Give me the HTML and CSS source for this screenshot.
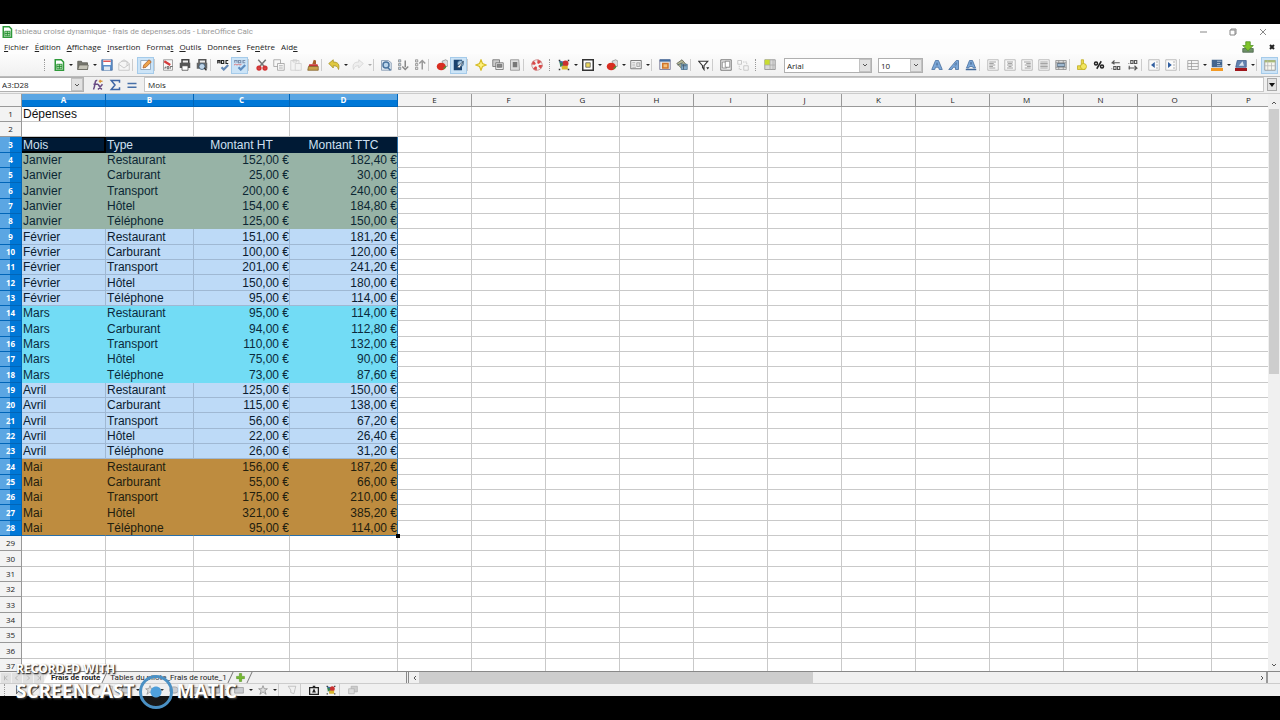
FILE: index.html
```html
<!DOCTYPE html>
<html lang="fr">
<head>
<meta charset="utf-8">
<title>tableau croisé dynamique - LibreOffice Calc</title>
<link rel="stylesheet" href="styles.css">
</head>
<body>
<svg class="defs" aria-hidden="true">
  <symbol id="calc" viewBox="0 0 16 16"><path d="M3 1h8l3 3v11H3z" fill="#fff" stroke="#2f9a3a" stroke-width="2"/><path d="M5 7h7v6H5zM5 10h7M8.500 7v6" fill="#a5dba5" stroke="#168423"/></symbol>
  <symbol id="folder" viewBox="0 0 16 16"><path d="M1 3h5l1 2h7v9H1z" fill="#77776f" stroke="#55554e"/><path d="M3 8h12l-1 6H1z" fill="#c4c3b7" stroke="#66665c"/></symbol>
  <symbol id="save" viewBox="0 0 16 16"><path d="M1 1h14v14H1z" fill="#5d8fca" stroke="#41699c"/><path d="M3 1h10v7H3z" fill="#fff"/><path d="M3 2h10v2H3z" fill="#dc5555"/><path d="M4 10h8v5H4z" fill="#dfe8f1"/></symbol>
  <symbol id="mail" viewBox="0 0 16 16" fill="#f5f5f5" stroke="#bbb"><path d="M1 6l7-5 7 5v9H1z"/><path d="M1 7l7 5 7-5M4 3h8v6"/></symbol>
  <symbol id="edit" viewBox="0 0 16 16"><path d="M1 2h13v12H1z" fill="#f8fbff" stroke="#819ab2"/><path d="M4 12l1-4 7-7 3 3-7 7z" fill="#eda34b" stroke="#a75a28"/></symbol>
  <symbol id="pdf" viewBox="0 0 16 16"><path d="M2 1h12v14H2z" fill="#f8f8f8" stroke="#888"/><path d="M3 3l8 5" stroke="#d43c3c" stroke-width="3"/><path d="M3 12h2v-2M7 13v-3h2v3zM11 13v-3h3" fill="none" stroke="#444"/></symbol>
  <symbol id="print" viewBox="0 0 16 16"><path d="M4 1h9v5H4z" fill="#eee" stroke="#444" stroke-width="2"/><path d="M1 5h14v7H1z" fill="#555"/><path d="M4 9h8v6H4z" fill="#fff" stroke="#444"/></symbol>
  <symbol id="preview" viewBox="0 0 16 16"><path d="M4 1h9v5H4z" fill="#eee" stroke="#555" stroke-width="2"/><path d="M1 5h14v8H1z" fill="#666"/><circle cx="8" cy="10" r="4" fill="#bed4e8" stroke="#35536f"/><path d="M11 12l3 3" stroke="#333" stroke-width="2"/></symbol>
  <symbol id="spell" viewBox="0 0 16 16"><path d="M1 6V2h3v4M1 4h3M6 6V2h3v4zM15 2h-3v4h3" fill="none" stroke="#222" stroke-width="1.500"/><path d="M6 11l3 3 6-6" fill="none" stroke="#6489b6" stroke-width="3"/></symbol>
  <symbol id="autospell" viewBox="0 0 16 16"><path d="M1 5V2h3v3M6 5V2h3v3zM15 2h-3v3h3" fill="none" stroke="#7b8fac" stroke-width="1.500"/><path d="M0 8l2-1 2 1 2-1 2 1 2-1" stroke="#db5757" fill="none"/><path d="M6 11l3 3 6-6" fill="none" stroke="#5e8dc0" stroke-width="3"/></symbol>
  <symbol id="cut" viewBox="0 0 16 16"><path d="M3 1l9 10M13 1L4 11" stroke="#777" stroke-width="2"/><g fill="none" stroke="#d33333" stroke-width="3"><circle cx="4" cy="12" r="2"/><circle cx="12" cy="12" r="2"/></g></symbol>
  <symbol id="copy" viewBox="0 0 16 16" fill="#f7f7f7" stroke="#999"><path d="M1 1h9v9H1z"/><path d="M6 6h9v9H6zM8 9h5M8 12h5"/></symbol>
  <symbol id="paste" viewBox="0 0 16 16" fill="#f3f3f3" stroke="#ccc"><path d="M1 2h11v13H1zM4 1h5v3H4z"/><path d="M7 6h8v9H7z"/></symbol>
  <symbol id="brush" viewBox="0 0 16 16"><path d="M9 1l3 1v5H7z" fill="#a85e28"/><path d="M3 7h11l1 3H2z" fill="#c63636"/><path d="M2 10h13v5H1z" fill="#c7a24b" stroke="#805c24"/></symbol>
  <symbol id="undo" viewBox="0 0 16 16"><path d="M1 6l6-5v3c6 0 9 3 7 10-1-4-3-5-7-5v3z" fill="#dfc840" stroke="#a38d1f"/></symbol>
  <symbol id="redo" viewBox="0 0 16 16"><path d="M15 6L9 1v3C3 4 0 7 2 14c1-4 3-5 7-5v3z" fill="#eee" stroke="#d2d2d2"/></symbol>
  <symbol id="find" viewBox="0 0 16 16"><path d="M2 2h9l4 3v10H2z" fill="#dfe8f2" stroke="#7990aa"/><circle cx="8" cy="8" r="4" fill="#b9d4eb" stroke="#48739e" stroke-width="2"/><path d="M10 11l4 4" stroke="#48739e" stroke-width="2"/></symbol>
  <symbol id="sortdown" viewBox="0 0 16 16"><path d="M2 1h3v3H2zM2 6h3v3H2zM2 11h3v3H2z" fill="#b9d1e5" stroke="#888"/><path d="M11 2v9M7 10l4 4 4-4" stroke="#888" stroke-width="2" fill="none"/></symbol>
  <symbol id="sortup" viewBox="0 0 16 16"><path d="M2 1h3v3H2zM2 6h3v3H2zM2 11h3v3H2z" fill="#e1e1e1" stroke="#888"/><path d="M11 14V3M7 6l4-4 4 4" stroke="#999" stroke-width="2" fill="none"/></symbol>
  <symbol id="chart" viewBox="0 0 16 16"><path d="M8 3l5-2 3 2v6l-4 2z" fill="#ddd" stroke="#888"/><ellipse cx="7" cy="10" rx="6" ry="5" fill="#d82d20"/><path d="M9 13l4-4c2 2-1 5-4 4z" fill="#46983d"/></symbol>
  <symbol id="nav" viewBox="0 0 16 16"><path d="M1 1h11v14H1z" fill="#1a426f"/><circle cx="10" cy="6" r="4" fill="#a4c5df" stroke="#305c85"/><path d="M5 11l9-8-5 9z" fill="#fff" stroke="#28405a"/></symbol>
  <symbol id="star" viewBox="0 0 16 16"><path d="M8 1l2 5 5 2-5 2-2 5-2-5-5-2 5-2z" fill="#fff27c" stroke="#d5bb25" stroke-width="1.500"/></symbol>
  <symbol id="gallery" viewBox="0 0 16 16" stroke="#666"><path d="M1 1h9v9H1z" fill="#ccc"/><path d="M5 5h10v9H5z" fill="#eee"/><path d="M7 7h6v4H7z" fill="#888"/></symbol>
  <symbol id="page" viewBox="0 0 16 16"><path d="M2 1h11l1 14H2z" fill="#ddd" stroke="#888"/><path d="M5 4h6v7H5z" fill="#777"/></symbol>
  <symbol id="help" viewBox="0 0 16 16" fill="none"><circle cx="8" cy="8" r="5" stroke="#eee" stroke-width="5"/><circle cx="8" cy="8" r="5" stroke="#da4747" stroke-width="5" stroke-dasharray="4 3.850"/><circle cx="8" cy="8" r="7" stroke="#c98282"/></symbol>
  <symbol id="shapes" viewBox="0 0 16 16"><path d="M1 2l9 2-4 9z" fill="#3b6aa7"/><circle cx="10" cy="6" r="4" fill="#c93030"/><path d="M5 9h8v5H5z" fill="#d9b62e"/><path d="M2 4l5 2-4 5z" fill="#348746"/><path d="M1 1h2v2H1zM13 1h2v2h-2zM1 13h2v2H1zM13 13h2v2h-2z" fill="#333"/></symbol>
  <symbol id="frame" viewBox="0 0 16 16"><path d="M1 1h14v14H1z" fill="#fff" stroke="#333" stroke-width="2"/><path d="M5 5h6v6H5z" fill="#ead65a" stroke="#555"/></symbol>
  <symbol id="form" viewBox="0 0 16 16"><path d="M1 2h14v11H1z" fill="#f4f4f4" stroke="#555"/><path d="M3 5h4M3 8h4M3 11h5M9 5h4v5H9z" stroke="#999" fill="#ddd"/></symbol>
  <symbol id="window" viewBox="0 0 16 16"><path d="M1 1h14v13H1z" fill="#e5eaef" stroke="#668"/><path d="M1 2h14" stroke="#426da1" stroke-width="3"/><path d="M5 6h7v6H5z" fill="#f5c07a" stroke="#d0752a" stroke-width="2"/></symbol>
  <symbol id="bucket" viewBox="0 0 16 16"><path d="M1 6l7-5 6 7-6 5z" fill="#b4b896" stroke="#575a4a"/><path d="M7 7h8v7H7z" fill="#83abc9" stroke="#45728f"/><path d="M2 8l7-3M8 9h6M10 7v7" stroke="#456"/></symbol>
  <symbol id="filter" viewBox="0 0 16 16"><path d="M1 3h12L8 9v5L6 11V9z" fill="#fff" stroke="#333" stroke-width="1.500"/><path d="M11 11h4l-2 3z" fill="#222"/></symbol>
  <symbol id="group" viewBox="0 0 16 16"><path d="M1 1h14v14H1z" fill="#eee" stroke="#555"/><path d="M3 4h6v8H3z" fill="#fff" stroke="#777"/><path d="M7 3h6v8H7z" fill="#fff" stroke="#777"/></symbol>
  <symbol id="ungroup" viewBox="0 0 16 16" fill="none" stroke="#bbb"><path d="M1 2h5v5H1zM9 9h6v6H9z"/><path d="M8 4h5v3M3 9v5h4" stroke-dasharray="2 1"/></symbol>
  <symbol id="cells" viewBox="0 0 16 16"><path d="M1 1h14v13H1z" fill="#d9d9d9" stroke="#888"/><path d="M1 1h7v7H1z" fill="#c8dc30"/><path d="M1 8h14M8 1v13M12 1v13" stroke="#aaa"/></symbol>
  <symbol id="bold" viewBox="0 0 16 16"><path d="M1 14L6 2h4l5 12h-4l-1-3H6l-1 3zM7 8h2L8 5z" fill="#7ca8d8" stroke="#40699b"/></symbol>
  <symbol id="italic" viewBox="0 0 16 16"><path d="M1 14L11 2h3v12h-4v-3H7l-2 3zM9 8h2V5z" fill="#7ca8d8" stroke="#40699b"/></symbol>
  <symbol id="underline" viewBox="0 0 16 16"><path d="M2 12L6 2h4l4 10h-3l-1-2H6l-1 2zM7 7h2L8 4z" fill="#7ca8d8" stroke="#40699b"/><path d="M1 14h14" stroke="#40699b" stroke-width="2"/></symbol>
  <symbol id="left" viewBox="0 0 16 16" fill="none" stroke="#888"><path d="M1 1h14v14H1z" stroke="#aaa"/><path d="M3 4h9M3 6h6M3 8h8M3 10h5M3 12h8"/></symbol>
  <symbol id="center" viewBox="0 0 16 16" fill="none" stroke="#888"><path d="M1 1h14v14H1z" stroke="#aaa"/><path d="M4 4h8M5 6h6M4 8h8M6 10h4M4 12h8"/></symbol>
  <symbol id="right" viewBox="0 0 16 16" fill="none" stroke="#888"><path d="M1 1h14v14H1z" stroke="#aaa"/><path d="M4 4h9M7 6h6M5 8h8M8 10h5M5 12h8"/></symbol>
  <symbol id="justify" viewBox="0 0 16 16" fill="none" stroke="#888"><path d="M1 1h14v14H1z" stroke="#aaa"/><path d="M3 4h10M3 6h10M3 8h10M3 10h10M3 12h10"/></symbol>
  <symbol id="merge" viewBox="0 0 16 16"><path d="M1 2h14v12H1zM1 5h14M1 11h14M5 2v12M11 2v12" fill="#ddd" stroke="#888"/><path d="M3 6h10v4H3z" fill="#9db7cf" stroke="#567"/></symbol>
  <symbol id="money" viewBox="0 0 16 16"><path d="M7 1h3v10H7zM2 9h10v5H2z" fill="#ead94b" stroke="#bca91c"/><circle cx="10" cy="10" r="4" fill="#f2e65f" stroke="#bca91c"/></symbol>
  <symbol id="percent" viewBox="0 0 16 16" fill="none" stroke="#222" stroke-width="2"><circle cx="4" cy="6" r="2"/><circle cx="12" cy="10" r="2"/><path d="M11 3L5 13"/></symbol>
  <symbol id="decadd" viewBox="0 0 16 16" fill="none" stroke="#555"><path d="M13 5H3l3-3M3 5l3 2M2 13h1M5 10h3v4H5zM10 10h3v4h-3z" stroke-width="1.500"/></symbol>
  <symbol id="decdel" viewBox="0 0 16 16" fill="none" stroke="#555"><path d="M2 6h1M5 2h3v4H5zM10 2h3v4h-3zM2 12h11l-3-3M13 12l-3 3M3 9v5" stroke-width="1.500"/></symbol>
  <symbol id="indent" viewBox="0 0 16 16"><path d="M1 1h14v14H1z" fill="#fafafa" stroke="#aaa"/><path d="M9 4v8L4 8z" fill="#315fa0"/><path d="M11 4h2M11 8h2M11 12h2" stroke="#777"/></symbol>
  <symbol id="outdent" viewBox="0 0 16 16"><path d="M1 1h14v14H1z" fill="#fafafa" stroke="#aaa"/><path d="M4 4v8l5-4z" fill="#315fa0"/><path d="M11 4h2M11 8h2M11 12h2" stroke="#777"/></symbol>
  <symbol id="borders" viewBox="0 0 16 16"><path d="M1 2h14v12H1zM1 6h14M1 10h14M6 2v12" fill="#f5f5f5" stroke="#999"/></symbol>
  <symbol id="bgcolor" viewBox="0 0 16 16"><path d="M1 1h14v10H1z" fill="#43658e"/><path d="M8 3h6M8 6h4M8 9h6" stroke="#c9d9e8"/><path d="M0 12h16v4H0z" fill="#f39a24"/></symbol>
  <symbol id="bordercolor" viewBox="0 0 16 16"><path d="M3 2h12v9H1z" fill="#6383b0" stroke="#3b5889"/><path d="M5 9l5-6 2 6z" fill="#dbe4ef"/><path d="M0 12h16v4H0z" fill="#9e151b"/></symbol>
  <symbol id="grid" viewBox="0 0 16 16"><path d="M1 2h14v13H1z" fill="#f6f6ef" stroke="#888"/><path d="M1 3h14" stroke="#a9bb78" stroke-width="3"/><path d="M5 2v13M10 5v10M1 9h14" stroke="#b6b6b6"/></symbol>
  <symbol id="fx" viewBox="0 0 16 16" fill="none"><path d="M7 2C3 1 5 8 2 14M2 7h6M8 7l5 7M14 7l-6 7" stroke="#684a83" stroke-width="2"/><path d="M9 3h5M11 1v4" stroke="#d99b43" stroke-width="2"/></symbol>
  <symbol id="sum" viewBox="0 0 16 16"><path d="M14 5V2H3l5 6-5 6h11v-3" fill="none" stroke="#3f66a5" stroke-width="2"/></symbol>
  <symbol id="equal" viewBox="0 0 16 16"><path d="M2 6h12M2 11h12" stroke="#4770a8" stroke-width="2"/></symbol>
  <symbol id="update" viewBox="0 0 16 16"><path d="M1 10h14v5H1z" fill="#6e8f68" stroke="#476047"/><path d="M5 1h6v5h4l-7 7-7-7h4z" fill="#80c52a" stroke="#4b8d22"/></symbol>
  <symbol id="fstar" viewBox="0 0 16 16"><path d="M8 1l2 5h5l-4 3 2 6-5-4-5 4 2-6-4-3h5z" fill="#ddd" stroke="#777"/></symbol>
  <symbol id="cursor" viewBox="0 0 16 16"><path d="M4 1v13l3-4 5 0z" fill="#fff" stroke="#222"/></symbol>
  <symbol id="line" viewBox="0 0 16 16"><path d="M2 13L13 3" stroke="#777" stroke-width="1.500"/></symbol>
  <symbol id="box" viewBox="0 0 16 16"><path d="M1 4h14v9H1z" fill="#c9ccd0" stroke="#888"/></symbol>
  <symbol id="oval" viewBox="0 0 16 16"><ellipse cx="8" cy="8" rx="7" ry="5" fill="#c9ccd0" stroke="#888"/></symbol>
  <symbol id="points" viewBox="0 0 16 16"><path d="M2 2h12l-3 12-5-2V8z" fill="none" stroke="#aaa"/></symbol>
  <symbol id="fontwork" viewBox="0 0 16 16"><path d="M1 4h14v11H1z" fill="#eee" stroke="#222" stroke-width="2"/><path d="M5 12l3-7 3 7zM6 1h4v3H6z" fill="#222"/></symbol>
  <symbol id="extrude" viewBox="0 0 16 16"><path d="M5 2h10v9H5z" fill="#ccc" stroke="#aaa"/><path d="M1 6h9v8H1z" fill="#ddd" stroke="#aaa"/></symbol>
  <symbol id="plus" viewBox="0 0 16 16"><path d="M6 1h4v5h5v4h-5v5H6v-5H1V6h5z" fill="#76ba2f" stroke="#4f8f1c"/></symbol>
</svg>

<main class="window">
  <header class="titlebar">
    <svg class="icon"><use href="#calc"/></svg>
    <h1 class="title">tableau croisé dynamique - frais de depenses.ods - LibreOffice Calc</h1>
    <button class="winbtn" aria-label="Réduire"><svg viewBox="0 0 8 8"><path d="M1 4h7"/></svg></button>
    <button class="winbtn" aria-label="Restaurer"><svg viewBox="0 0 8 8"><path d="M1 2h5v5H1zM2 2V1h5v5H6"/></svg></button>
    <button class="winbtn" aria-label="Fermer"><svg viewBox="0 0 8 8"><path d="M1 1l6 6M7 1L1 7"/></svg></button>
  </header>
  <nav class="menubar">
    <button><u>F</u>ichier</button><button><u>É</u>dition</button><button><u>A</u>ffichage</button><button><u>I</u>nsertion</button><button>Forma<u>t</u></button><button><u>O</u>utils</button><button>Donnée<u>s</u></button><button>Fe<u>n</u>être</button><button>Aid<u>e</u></button>
    <span class="spacer"></span>
    <button class="update" aria-label="Mise à jour"><svg class="icon"><use href="#update"/></svg></button>
    <button class="closedoc" aria-label="Fermer le document"><svg viewBox="0 0 8 8"><path d="M2 2l4 4M6 2L2 6"/></svg></button>
  </nav>
  <div class="toolbar" id="toolbar"></div>
  <div class="formulabar">
    <div class="combo namebox"><input id="cellref" aria-label="Zone de nom" value="A3:D28"><button aria-label="Ouvrir la liste"><svg viewBox="0 0 8 8"><path d="M2 3l2 2 2-2"/></svg></button></div>
    <button class="tool" aria-label="Assistant Fonctions"><svg class="icon"><use href="#fx"/></svg></button>
    <button class="tool" aria-label="Somme"><svg class="icon"><use href="#sum"/></svg></button>
    <button class="tool" aria-label="Fonction"><svg class="icon"><use href="#equal"/></svg></button>
    <input class="formula" aria-label="Ligne de saisie" value="Mois">
    <button class="expand" aria-label="Agrandir"><svg viewBox="0 0 8 8"><path d="M1 2h6L4 6z"/></svg></button>
  </div>
  <section class="workspace">
    <div class="viewport"><table class="sheet" id="expenses"></table></div>
    <div class="vscroll">
      <svg class="chev" viewBox="0 0 8 8"><path d="M2 5l2-2 2 2"/></svg>
      <div class="vtrack"><div class="vthumb"></div></div>
      <svg class="chev" viewBox="0 0 8 8"><path d="M2 3l2 2 2-2"/></svg>
    </div>
  </section>
  <div class="tabbar">
    <div class="tabnav">
      <button aria-label="Première feuille"><svg viewBox="0 0 8 8"><path d="M2 1v6M6 1L3 4l3 3"/></svg></button>
      <button aria-label="Feuille précédente"><svg viewBox="0 0 8 8"><path d="M5 1L2 4l3 3"/></svg></button>
      <button aria-label="Feuille suivante"><svg viewBox="0 0 8 8"><path d="M3 1l3 3-3 3"/></svg></button>
      <button aria-label="Dernière feuille"><svg viewBox="0 0 8 8"><path d="M2 1l3 3-3 3M6 1v6"/></svg></button>
    </div>
    <button class="tab active">Frais de route</button>
    <button class="tab second">Tables du pilote_Frais de route_1</button>
    <button class="tab add" aria-label="Ajouter une feuille"><svg class="icon"><use href="#plus"/></svg></button>
    <div class="hscroll">
      <svg class="chev" viewBox="0 0 8 8"><path d="M5 2L3 4l2 2"/></svg>
      <div class="htrack"><div class="hthumb"></div></div>
      <svg class="chev" viewBox="0 0 8 8"><path d="M3 2l2 2-2 2"/></svg>
    </div>
  </div>
  <div class="drawbar" id="drawbar"></div>
</main>
<div class="watermark">
  <div class="wm-top">RECORDED WITH</div>
  <div class="wm-row"><span class="wm-word">SCREENCAST</span><span class="wm-ring"></span><span class="wm-word">MATIC</span></div>
</div>
<script src="script.js"></script>
</body>
</html>
```

FILE: styles.css
```css
* { box-sizing: border-box; }
body { margin: 0; height: 100vh; padding: 24px 0; background: #000; font-family: "Open Sans", "Noto Sans", sans-serif; font-size: 8px; color: #222; overflow: hidden; }
button, input, select { font: inherit; color: inherit; margin: 0; padding: 0; border: 0; background: none; border-radius: 0; }
.defs { position: absolute; width: 0; height: 0; }
.icon { width: 12px; height: 12px; display: block; flex: none; }
.window { height: 100%; display: flex; flex-direction: column; background: #f0f0f0; }
.titlebar { height: 15px; flex: none; display: flex; align-items: center; background: #fff; padding: 0 2px 0 1px; }
.titlebar .title { flex: 1; margin: 0 0 0 2px; font-family: Roboto, sans-serif; font-size: 8px; font-weight: 400; color: #999; white-space: nowrap; }
.winbtn { width: 30px; height: 12px; display: flex; align-items: center; justify-content: center; }
.winbtn svg, .closedoc svg { width: 8px; height: 8px; fill: none; stroke: #888; display: block; }
.menubar { height: 15px; flex: none; display: flex; align-items: center; gap: 6px; padding: 0 4px; background: #fdfdfd; }
.menubar button { white-space: nowrap; }
.spacer { flex: 1; }
.closedoc { width: 16px; display: flex; justify-content: flex-end; }
.closedoc svg { stroke: #222; stroke-width: 2; }
.toolbar { height: 23px; flex: none; display: flex; align-items: center; padding-left: 40px; background: linear-gradient(#fcfcfc, #f0f0f0); border-bottom: 1px solid #bbb; overflow: hidden; }
.tool { width: 17px; height: 17px; flex: none; display: flex; align-items: center; justify-content: center; }
.tool.on { background: #cce4f7; border: 1px solid #a5cbea; }
.arrow { width: 7px; height: 12px; flex: none; display: flex; align-items: center; justify-content: center; }
.arrow svg { width: 4px; height: 4px; fill: #222; }
.arrow.off svg { fill: #aaa; }
.sep { width: 5px; height: 12px; flex: none; border-left: 1px solid #ccc; }
.sep.tight { width: 4px; }
.grip { width: 2px; height: 12px; margin: 0 4px; flex: none; border-left: 1px dotted #999; }
.combo { display: flex; height: 15px; flex: none; background: #fff; border: 1px solid #b0b0b0; }
.combo input { flex: 1; min-width: 0; padding-left: 2px; }
.combo button { width: 12px; flex: none; background: #e2e2e2; border: 1px solid #c2c2c2; display: flex; align-items: center; justify-content: center; }
.combo svg, .chev { width: 8px; height: 8px; fill: none; stroke: #555; }
.fontname { width: 88px; margin: 0 6px; }
.fontsize { width: 45px; margin-right: 5px; }
.formulabar { height: 17px; flex: none; display: flex; align-items: center; background: #f0f0f0; border-bottom: 1px solid #ccc; padding: 0 3px 1px 0; }
.namebox { width: 84px; margin-right: 5px; border-left: 0; }
.formula { flex: 1; height: 15px; margin-left: 4px; padding-left: 3px; background: #fff; border: 1px solid #c8c8c8; }
.expand { width: 10px; height: 13px; margin-left: 3px; background: #e2e2e2; border: 1px solid #aaa; display: flex; align-items: center; justify-content: center; }
.expand svg { width: 8px; height: 8px; fill: #111; }
.workspace { flex: 1; min-height: 0; display: flex; }
.viewport { flex: 1; min-width: 0; overflow: hidden; background: #fff; }
.sheet { width: 1286px; table-layout: fixed; border-collapse: separate; border-spacing: 0; font-family: "Liberation Sans", Arial, sans-serif; font-size: 12px; line-height: 14px; color: #111; }
.c-head { width: 22px; }
.c-a { width: 84px; }
.c-b { width: 88px; }
.c-c { width: 96px; }
.c-d { width: 108px; }
.sheet th, .sheet td { padding: 0 1px; overflow: hidden; white-space: nowrap; border-right: 1px solid #c9c9c9; border-bottom: 1px solid #c9c9c9; }
.sheet td.num { padding-right: 0; }
.sheet th { font-family: "Open Sans", "Noto Sans", sans-serif; font-size: 8px; line-height: 10px; font-weight: 400; color: #222; background: #f3f3f3; border-color: #999; text-align: center; }
.sheet thead th { height: 13px; }
.sheet thead th.sel { background: linear-gradient(#5ba6e3 50%, #0078d7 50%); border-color: #0065b8; color: #fff; font-weight: 700; }
.sheet tbody tr { height: 15px; }
.sheet tbody tr:nth-child(3n) { height: 16px; }
.sheet tbody th.sel { background: linear-gradient(90deg, #5ba6e3 50%, #0078d7 50%); border-color: #0065b8; color: #fff; font-weight: 700; }
.sheet td.num { text-align: right; }
.sheet td.mid { text-align: center; }
.sheet .head td.fill { background: #001a35; border-color: #001a35; color: #cfe0f2; }
.sheet .head td.cursor { border: 1px solid #000; border-width: 1px 2px 2px 0; line-height: 12px; }
.sheet .green td.fill { background: #97b3a6; border-color: #97b3a6; color: #0b2633; }
.sheet .pale td.fill { background: #bddaf7; border-color: #9fb8d3; color: #0b1c30; }
.sheet .cyan td.fill { background: #72dcf5; border-color: #72dcf5; color: #0b2a3c; }
.sheet .amber td.fill { background: #be8c3f; border-color: #be8c3f; color: #22200f; }
.sheet tr td.fill.edge { border-right-color: #2a6fa8; }
.sheet tr.final td.fill { border-bottom-color: #2a6fa8; }
.sheet td.corner { position: relative; overflow: visible; }
.sheet td.corner::after { content: ""; position: absolute; right: -3px; bottom: -3px; width: 4px; height: 4px; background: #000; }
.vscroll { width: 12px; flex: none; display: flex; flex-direction: column; align-items: center; background: #f0f0f0; padding: 5px 0 2px; }
.vtrack { flex: 1; width: 10px; padding-top: 2px; }
.vthumb { height: 48%; background: #cdcdcd; }
.tabbar { height: 13px; flex: none; display: flex; align-items: stretch; background: #f0f0f0; border-top: 1px solid #888; border-bottom: 1px solid #ccc; padding-right: 12px; font-family: Roboto, sans-serif; }
.tabnav { width: 46px; flex: none; display: flex; align-items: center; gap: 1px; padding-left: 1px; }
.tabnav button { width: 10px; height: 10px; background: #e0e0e0; display: flex; align-items: center; justify-content: center; }
.tabnav svg { width: 6px; height: 6px; fill: none; stroke: #aaa; }
.tab { position: relative; z-index: 0; flex: none; padding: 0 5px; white-space: nowrap; line-height: 10px; }
.tab::before { content: ""; position: absolute; z-index: -1; inset: 0; border-right: 1px solid #777; transform: skewX(-25deg); }
.tab.active { font-weight: 700; }
.tab.active::before { background: #fff; }
.tab.add { display: flex; align-items: center; width: 18px; padding: 0 4px; }
.tab.add .icon { width: 9px; height: 9px; }
.hscroll { flex: 1; display: flex; align-items: center; margin-left: 156px; padding-left: 2px; border-left: 3px double #888; border-right: 2px solid #999; }
.htrack { flex: 1; height: 11px; }
.hthumb { width: 47%; height: 100%; background: #cdcdcd; }
.drawbar { height: 12px; flex: none; display: flex; align-items: center; padding-left: 0; overflow: hidden; }
.drawbar .tool { height: 12px; }
.drawbar .icon { width: 10px; height: 10px; }
.watermark { position: absolute; left: 16px; bottom: 11px; color: #fff; font-family: "Open Sans", sans-serif; font-weight: 700; text-shadow: 1px 1px 1px #333, 1px 1px 2px #444; white-space: nowrap; }
.wm-top { font-size: 12px; line-height: 12px; }
.wm-row { display: flex; align-items: center; gap: 4px; height: 34px; }
.wm-word { font-size: 19px; line-height: 24px; padding-bottom: 2px; }
.wm-ring { width: 34px; height: 34px; border: 3px solid #4a90c4; border-radius: 50%; background: radial-gradient(circle, #4f9fda 0 5px, rgba(230, 230, 230, .1) 6px); }
```

FILE: script.js
```js
const svg = id => `<svg class="icon" aria-hidden="true"><use href="#${id}"/></svg>`;
const combo = (cls, label, value) => `<div class="combo ${cls}"><input aria-label="${label}" value="${value}"><button aria-label="Ouvrir ${label}"><svg viewBox="0 0 8 8"><path d="M2 3l2 2 2-2"/></svg></button></div>`;

// "|" separator, "!" narrow separator, ":" grip, "v" menu arrow, "*" prefix for a pressed button
function build(spec) {
  return spec.split(' ').map(t => {
    if (t === '|') return '<span class="sep"></span>';
    if (t === '!') return '<span class="sep tight"></span>';
    if (t === ':') return '<span class="grip"></span>';
    if (t === 'v' || t === 'w') return `<button class="arrow${t === 'w' ? ' off' : ''}" aria-label="Options"><svg viewBox="0 0 4 4"><path d="M0 1h4L2 3z"/></svg></button>`;
    if (t === 'FONT') return combo('fontname', 'Police', 'Arial');
    if (t === 'SIZE') return combo('fontsize', 'Taille', '10');
    const on = t[0] === '*', id = on ? t.slice(1) : t;
    return `<button class="tool${on ? ' on' : ''}" aria-label="${id}">${svg(id)}</button>`;
  }).join('');
}
document.getElementById('toolbar').innerHTML = build(': calc v folder v save mail | *edit | pdf print preview ! spell *autospell | cut copy paste brush ! undo v redo w ! find sortdown sortup | chart *nav | star gallery page | help : shapes v frame v chart v form v | window bucket | filter | group ungroup : cells FONT SIZE bold italic underline | left center right justify merge ! money percent decadd decdel ! indent outdent | borders v bgcolor v bordercolor v | *grid');
document.getElementById('drawbar').innerHTML = build(': cursor line box oval | line points oval v fstar v oval v box box v box v fstar v | points | fontwork shapes | extrude');

const kinds = ['Restaurant', 'Carburant', 'Transport', 'Hôtel', 'Téléphone'];
const months = [
  ['Janvier', 'green', ['152,00', '25,00', '200,00', '154,00', '125,00'], ['182,40', '30,00', '240,00', '184,80', '150,00']],
  ['Février', 'pale', ['151,00', '100,00', '201,00', '150,00', '95,00'], ['181,20', '120,00', '241,20', '180,00', '114,00']],
  ['Mars', 'cyan', ['95,00', '94,00', '110,00', '75,00', '73,00'], ['114,00', '112,80', '132,00', '90,00', '87,60']],
  ['Avril', 'pale', ['125,00', '115,00', '56,00', '22,00', '26,00'], ['150,00', '138,00', '67,20', '26,40', '31,20']],
  ['Mai', 'amber', ['156,00', '55,00', '175,00', '321,00', '95,00'], ['187,20', '66,00', '210,00', '385,20', '114,00']]
];
const cols = 'ABCDEFGHIJKLMNOP'.split('');
let html = '<colgroup><col class="c-head"><col class="c-a"><col class="c-b"><col class="c-c"><col class="c-d">' + '<col>'.repeat(12) + '</colgroup><thead><tr><th></th>';
html += cols.map((c, i) => `<th scope="col"${i < 4 ? ' class="sel"' : ''}>${c}</th>`).join('') + '</tr></thead><tbody>';
const blank = '<td></td>';
for (let r = 1; r <= 37; r++) {
  const sel = r >= 3 && r <= 28;
  let cls = '', cells;
  if (r === 1) cells = '<td>Dépenses</td>' + blank.repeat(3);
  else if (r === 3) {
    cls = 'head';
    cells = '<td class="fill cursor">Mois</td><td class="fill">Type</td><td class="fill mid">Montant HT</td><td class="fill mid edge">Montant TTC</td>';
  } else if (sel) {
    const m = months[Math.floor((r - 4) / 5)], k = (r - 4) % 5;
    cls = m[1] + (r === 28 ? ' final' : '');
    cells = `<td class="fill">${m[0]}</td><td class="fill">${kinds[k]}</td><td class="fill num">${m[2][k]} €</td><td class="fill num edge${r === 28 ? ' corner' : ''}">${m[3][k]} €</td>`;
  } else cells = blank.repeat(4);
  html += `<tr class="${cls}"><th scope="row"${sel ? ' class="sel"' : ''}>${r}</th>${cells}${blank.repeat(12)}</tr>`;
}
document.getElementById('expenses').innerHTML = html + '</tbody>';
```
